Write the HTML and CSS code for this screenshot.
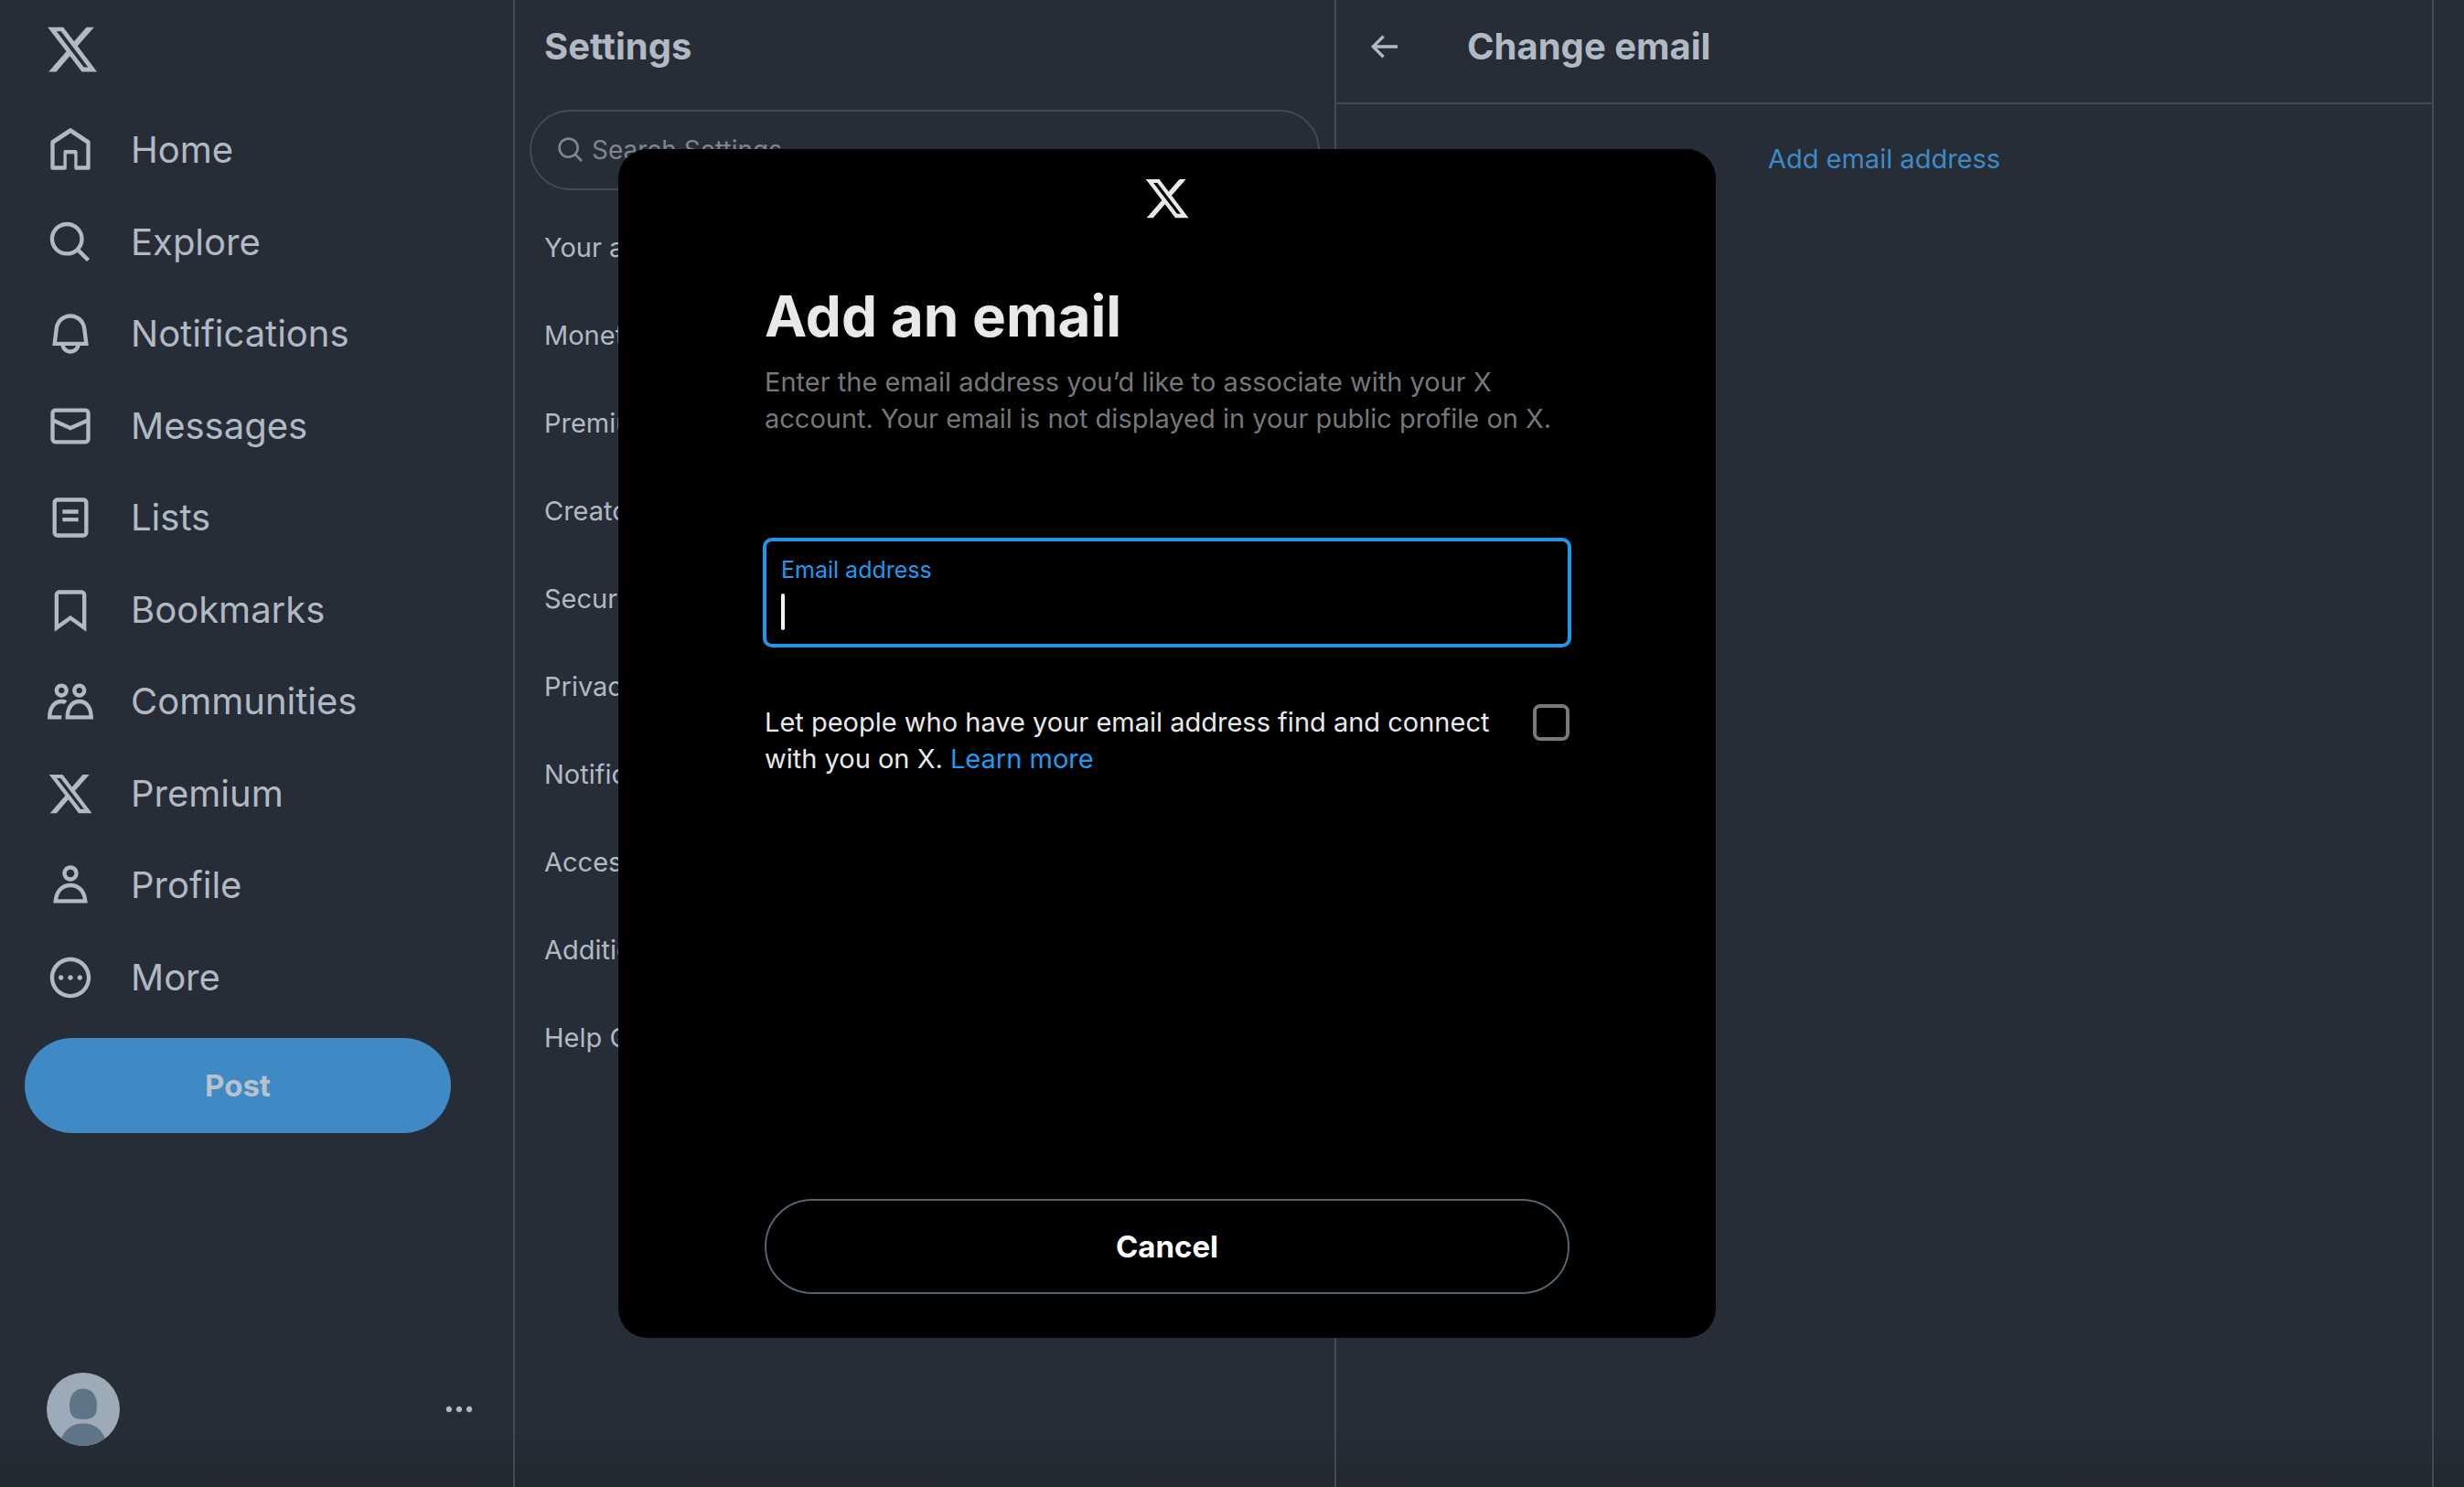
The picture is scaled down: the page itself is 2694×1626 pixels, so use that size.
FILE: index.html
```html
<!DOCTYPE html>
<html lang="en">
<head>
<meta charset="utf-8">
<meta name="viewport" content="width=device-width, initial-scale=1">
<title>Change email / X</title>
<link rel="stylesheet" href="styles.css">
</head>
<body>
<svg class="sprite" aria-hidden="true">
  <symbol id="x" viewBox="0 0 24 24"><path d="M18.244 2.25h3.308l-7.227 8.26 8.502 11.24H16.17l-5.214-6.817L4.99 21.75H1.68l7.73-8.835L1.254 2.25H8.08l4.713 6.231zm-1.161 17.52h1.833L7.084 4.126H5.117z"/></symbol>
  <symbol id="home" viewBox="0 0 24 24"><path d="M21.591 7.146L12.52 1.157c-.316-.21-.724-.21-1.04 0l-9.071 5.99c-.26.173-.409.456-.409.757v13.183c0 .502.418.913.929.913H9.14c.51 0 .929-.41.929-.913v-7.075h3.909v7.075c0 .502.417.913.928.913h6.165c.511 0 .929-.41.929-.913V7.904c0-.301-.158-.584-.408-.758zM20 20l-4.5.01.011-7.097c0-.502-.418-.913-.928-.913H9.44c-.511 0-.929.41-.929.913L8.5 20H4V8.773l8.011-5.342L20 8.764z"/></symbol>
  <symbol id="search" viewBox="0 0 24 24"><path d="M10.25 3.75c-3.59 0-6.5 2.91-6.5 6.5s2.91 6.5 6.5 6.5c1.795 0 3.419-.726 4.596-1.904 1.178-1.177 1.904-2.801 1.904-4.596 0-3.59-2.91-6.5-6.5-6.5zm-8.5 6.5c0-4.694 3.806-8.5 8.5-8.5s8.5 3.806 8.5 8.5c0 1.986-.682 3.815-1.824 5.262l4.781 4.781-1.414 1.414-4.781-4.781c-1.447 1.142-3.276 1.824-5.262 1.824-4.694 0-8.5-3.806-8.5-8.5z"/></symbol>
  <symbol id="bell" viewBox="0 0 24 24"><path d="M19.993 9.042C19.48 5.017 16.054 2 11.996 2s-7.49 3.021-7.999 7.051L2.866 18H7.1c.463 2.282 2.481 4 4.9 4s4.437-1.718 4.9-4h4.236l-1.143-8.958zM12 20c-1.306 0-2.417-.835-2.829-2h5.658c-.412 1.165-1.523 2-2.829 2zm-6.866-4l.847-6.698C6.364 6.272 8.941 4 11.996 4s5.627 2.268 6.013 5.295L18.864 16H5.134z"/></symbol>
  <symbol id="mail" viewBox="0 0 24 24"><path d="M1.998 5.5c0-1.381 1.119-2.5 2.5-2.5h15c1.381 0 2.5 1.119 2.5 2.5v13c0 1.381-1.119 2.5-2.5 2.5h-15c-1.381 0-2.5-1.119-2.5-2.5v-13zm2.5-.5c-.276 0-.5.224-.5.5v2.764l8 3.638 8-3.636V5.5c0-.276-.224-.5-.5-.5h-15zm15.5 5.463l-8 3.636-8-3.638V18.5c0 .276.224.5.5.5h15c.276 0 .5-.224.5-.5v-8.037z"/></symbol>
  <symbol id="list" viewBox="0 0 24 24"><path d="M3 4.5C3 3.12 4.12 2 5.5 2h13C19.88 2 21 3.12 21 4.5v15c0 1.38-1.12 2.5-2.5 2.5h-13C4.12 22 3 20.88 3 19.5v-15zM5.5 4c-.28 0-.5.22-.5.5v15c0 .28.22.5.5.5h13c.28 0 .5-.22.5-.5v-15c0-.28-.22-.5-.5-.5h-13zM16 10H8V8h8v2zm-8 2h8v2H8v-2z"/></symbol>
  <symbol id="bookmark" viewBox="0 0 24 24"><path d="M4 4.5C4 3.12 5.119 2 6.5 2h11C18.881 2 20 3.12 20 4.5v18.44l-8-5.71-8 5.71V4.5zM6.5 4c-.276 0-.5.22-.5.5v14.56l6-4.29 6 4.29V4.5c0-.28-.224-.5-.5-.5h-11z"/></symbol>
  <symbol id="people" viewBox="0 0 24 24"><path d="M7.501 19.917L7.471 21H.472l.029-1.027c.184-6.618 3.736-8.977 7-8.977.963 0 1.95.212 2.87.672-.444.478-.851 1.03-1.212 1.656-.507-.204-1.054-.329-1.658-.329-2.767 0-4.57 2.223-4.938 6.004H7.56c-.023.302-.05.599-.059.918zm15.998.056L23.528 21H9.472l.029-1.027c.184-6.618 3.736-8.977 7-8.977s6.816 2.358 7 8.977zM21.437 19c-.367-3.781-2.17-6.004-4.938-6.004s-4.57 2.223-4.938 6.004h9.875zm-4.938-9c-.799 0-1.527-.279-2.116-.73-.836-.64-1.384-1.638-1.384-2.77 0-1.93 1.567-3.5 3.5-3.5s3.5 1.57 3.5 3.5c0 1.132-.548 2.13-1.384 2.77-.589.451-1.317.73-2.116.73zm-1.5-3.5c0 .827.673 1.5 1.5 1.5s1.5-.673 1.5-1.5-.673-1.5-1.5-1.5-1.5.673-1.5 1.5zM7.501 3C9.434 3 11 4.57 11 6.5S9.434 10 7.501 10s-3.5-1.57-3.5-3.5S5.568 3 7.501 3zm0 2c-.827 0-1.5.673-1.5 1.5S6.674 8 7.501 8s1.5-.673 1.5-1.5S8.328 5 7.501 5z"/></symbol>
  <symbol id="person" viewBox="0 0 24 24"><path d="M5.651 19h12.698c-.337-1.8-1.023-3.21-1.945-4.19C15.318 13.65 13.838 13 12 13s-3.317.65-4.404 1.81c-.922.98-1.608 2.39-1.945 4.19zm.486-5.56C7.627 11.85 9.648 11 12 11s4.373.85 5.863 2.44c1.477 1.58 2.366 3.8 2.632 6.46l.11 1.1H3.395l.11-1.1c.266-2.66 1.155-4.88 2.632-6.46zM12 4c-1.105 0-2 .9-2 2s.895 2 2 2 2-.9 2-2-.895-2-2-2zM8 6c0-2.21 1.791-4 4-4s4 1.79 4 4-1.791 4-4 4-4-1.79-4-4z"/></symbol>
  <symbol id="more" viewBox="0 0 24 24"><path d="M3.75 12c0-4.56 3.69-8.25 8.25-8.25s8.25 3.69 8.25 8.25-3.69 8.25-8.25 8.25S3.75 16.56 3.75 12zM12 1.75C6.34 1.75 1.75 6.34 1.75 12S6.34 22.25 12 22.25 22.25 17.66 22.25 12 17.66 1.75 12 1.75zm-4.75 11.5c.69 0 1.25-.56 1.25-1.25s-.56-1.25-1.25-1.25S6 11.31 6 12s.56 1.25 1.25 1.25zm9.5 0c.69 0 1.25-.56 1.25-1.25s-.56-1.25-1.25-1.25-1.25.56-1.25 1.25.56 1.25 1.25 1.25zM13.25 12c0 .69-.56 1.25-1.25 1.25s-1.25-.56-1.25-1.25.56-1.25 1.25-1.25 1.25.56 1.25 1.25z"/></symbol>
  <symbol id="dots" viewBox="0 0 24 24"><path d="M3 12c0-1.1.9-2 2-2s2 .9 2 2-.9 2-2 2-2-.9-2-2zm9 2c1.1 0 2-.9 2-2s-.9-2-2-2-2 .9-2 2 .9 2 2 2zm7 0c1.1 0 2-.9 2-2s-.9-2-2-2-2 .9-2 2 .9 2 2 2z"/></symbol>
  <symbol id="back" viewBox="0 0 24 24"><path d="M7.414 13l5.043 5.04-1.414 1.42L3.586 12l7.457-7.46 1.414 1.42L7.414 11H21v2H7.414z"/></symbol>
</svg>

<div class="app">
  <header class="sidebar">
    <a class="logo" href="#" aria-label="X"><svg><use href="#x"/></svg></a>
    <nav class="nav">
      <a href="#"><svg><use href="#home"/></svg>Home</a>
      <a href="#"><svg><use href="#search"/></svg>Explore</a>
      <a href="#"><svg><use href="#bell"/></svg>Notifications</a>
      <a href="#"><svg><use href="#mail"/></svg>Messages</a>
      <a href="#"><svg><use href="#list"/></svg>Lists</a>
      <a href="#"><svg><use href="#bookmark"/></svg>Bookmarks</a>
      <a href="#"><svg><use href="#people"/></svg>Communities</a>
      <a href="#"><svg><use href="#x"/></svg>Premium</a>
      <a href="#"><svg><use href="#person"/></svg>Profile</a>
      <a href="#"><svg><use href="#more"/></svg>More</a>
    </nav>
    <button class="post" type="button">Post</button>
    <button class="account" type="button" aria-label="Account menu">
      <svg class="avatar" viewBox="0 0 80 80">
        <clipPath id="round"><circle cx="40" cy="40" r="40"/></clipPath>
        <g clip-path="url(#round)">
          <path class="avatar-bg" d="M0 0h80v80H0z"/>
          <path d="M40 17.500c10 0 15 8 15 18 0 12-4 15.500-15 15.500s-15-3.500-15-15.500c0-10 5-18 15-18z"/>
          <path d="M40 55.500c12 0 20 6 24.500 17.500V82h-49v-9C20 61.500 28 55.500 40 55.500z"/>
        </g>
      </svg>
      <svg class="dots"><use href="#dots"/></svg>
    </button>
  </header>

  <section class="settings">
    <h2 class="heading">Settings</h2>
    <label class="search">
      <svg><use href="#search"/></svg>
      <input type="search" placeholder="Search Settings" aria-label="Search Settings">
    </label>
    <nav class="settings-list">
      <a href="#">Your account</a>
      <a href="#">Monetization</a>
      <a href="#">Premium</a>
      <a href="#">Creator Subscriptions</a>
      <a href="#">Security and account access</a>
      <a href="#">Privacy and safety</a>
      <a href="#">Notifications</a>
      <a href="#">Accessibility, display, and languages</a>
      <a href="#">Additional resources</a>
      <a href="#">Help Center</a>
    </nav>
  </section>

  <main class="detail">
    <div class="detail-head">
      <button class="back" type="button" aria-label="Back"><svg><use href="#back"/></svg></button>
      <h2>Change email</h2>
    </div>
    <a class="add-email" href="#">Add email address</a>
  </main>
</div>

<div class="overlay">
  <form class="modal" role="dialog" aria-labelledby="modal-title">
    <svg class="modal-logo"><use href="#x"/></svg>
    <h1 id="modal-title">Add an email</h1>
    <p class="intro">Enter the email address you’d like to associate with your X account. Your email is not displayed in your public profile on X.</p>
    <div class="field">
      <label for="email">Email address</label>
      <div class="field-line">
        <span class="caret"></span>
        <input id="email" type="email" autocomplete="email">
      </div>
    </div>
    <div class="consent">
      <label for="discoverable">Let people who have your email address find and connect with you on X. <a href="#">Learn more</a></label>
      <input id="discoverable" type="checkbox">
    </div>
    <button class="cancel" type="button">Cancel</button>
  </form>
</div>
</body>
</html>
```
FILE: styles.css
```css
:root {
  --bg: #262d36;
  --line: #434a55;
  --text: #b1b9c5;
  --muted: #7e8690;
  --blue: #1d9bf0;
  --blue-dim: #3f8ac5;
}

* {
  box-sizing: border-box;
}

body {
  margin: 0;
  background: var(--bg);
  color: var(--text);
  font-family: Inter, "Liberation Sans", sans-serif;
  font-size: 29px;
  line-height: 40px;
}

h1,
h2,
p {
  margin: 0;
}

h2 {
  font-size: 40px;
}

a {
  color: inherit;
  text-decoration: none;
}

button,
input {
  margin: 0;
  padding: 0;
  border: 0;
  outline: 0;
  background: none;
  color: inherit;
  font: inherit;
}

svg {
  display: block;
  flex: none;
  fill: currentColor;
}

.sprite {
  position: absolute;
  width: 0;
  height: 0;
}

/* Page columns */
.app {
  display: grid;
  grid-template-columns: 561px 898fr 1202fr;
  min-height: 100vh;
  padding-right: 33px;
  background: linear-gradient(to top, #22282e, var(--bg) 64px);
}

/* Sidebar */
.sidebar {
  display: flex;
  flex-direction: column;
  padding: 24px 40px 45px 27px;
}

.logo {
  align-self: flex-start;
  margin: 0 0 30px 22px;
}

.logo svg {
  width: 60px;
  height: 60px;
}

.nav {
  display: grid;
  grid-auto-rows: 1fr;
  height: 1005px;
  font-size: 40px;
}

.nav a {
  display: flex;
  align-items: center;
  gap: 40px;
  padding-left: 24px;
}

.nav svg {
  width: 52px;
  height: 52px;
}

.post {
  height: 104px;
  margin: 16px 28px 0 0;
  border-radius: 52px;
  background: var(--blue-dim);
  color: #b8c2cd;
  font-size: 33px;
  font-weight: 700;
}

.account {
  display: flex;
  align-items: center;
  justify-content: space-between;
  margin-top: auto;
  padding-left: 24px;
}

.avatar {
  width: 80px;
  height: 80px;
  fill: #5f7486;
}

.avatar-bg {
  fill: #9dabb9;
}

.dots {
  width: 38px;
  height: 38px;
}

/* Settings column */
.settings {
  padding: 0 16px;
  border-left: 2px solid var(--line);
}

.heading {
  padding: 31px 0 0 16px;
}

.search {
  display: flex;
  align-items: center;
  gap: 7px;
  height: 88px;
  margin: 49px 0 15px;
  padding: 0 27px;
  border: 2px solid var(--line);
  border-radius: 44px;
  color: var(--muted);
  font-size: 28px;
}

.search svg {
  width: 32px;
  height: 32px;
}

.search input {
  flex: 1;
}

.search input::placeholder {
  color: inherit;
  opacity: 1;
}

.settings-list a {
  display: block;
  padding: 28px 16px;
}

/* Detail column */
.detail {
  border: solid var(--line);
  border-width: 0 2px;
}

.detail-head {
  display: flex;
  align-items: center;
  gap: 71px;
  padding: 31px 32px 41px;
  border-bottom: 2px solid var(--line);
}

.back svg {
  width: 40px;
  height: 40px;
}

.add-email {
  display: block;
  width: max-content;
  margin: 40px auto 0;
  color: var(--blue-dim);
}

/* Dialog */
.overlay {
  position: fixed;
  inset: 0 142px 0 0;
  display: flex;
  align-items: center;
  justify-content: center;
}

.modal {
  display: flex;
  flex-direction: column;
  width: 1200px;
  min-height: 1300px;
  padding: 28px 160px 48px;
  border-radius: 32px;
  background: #000;
  color: #e7e9ea;
}

.modal-logo {
  align-self: center;
  width: 52px;
  height: 52px;
}

.modal h1 {
  margin-top: 67px;
  font-size: 62px;
  line-height: 72px;
}

.intro {
  margin-top: 16px;
  color: #74777a;
}

.field {
  margin: 110px -2px 0;
  padding: 15px 16px;
  border: 4px solid #2196e8;
  border-radius: 10px;
}

.field label {
  display: block;
  color: var(--blue);
  font-size: 25px;
  line-height: 32px;
}

.field-line {
  display: flex;
  height: 40px;
  margin-top: 10px;
}

.field-line input {
  flex: 1;
  min-width: 0;
  caret-color: transparent;
}

.caret {
  width: 4px;
  border-radius: 2px;
  background: #f4f4f4;
}

.consent {
  display: flex;
  align-items: flex-start;
  gap: 30px;
  margin-top: 62px;
}

.consent label {
  flex: 1;
}

.consent a {
  color: var(--blue);
}

.consent input {
  flex: none;
  width: 40px;
  height: 40px;
  border: 4px solid #77797b;
  border-radius: 8px;
  appearance: none;
}

.cancel {
  height: 104px;
  margin-top: auto;
  border: 2px solid #536471;
  border-radius: 52px;
  color: #fff;
  font-size: 33px;
  font-weight: 700;
}
```
